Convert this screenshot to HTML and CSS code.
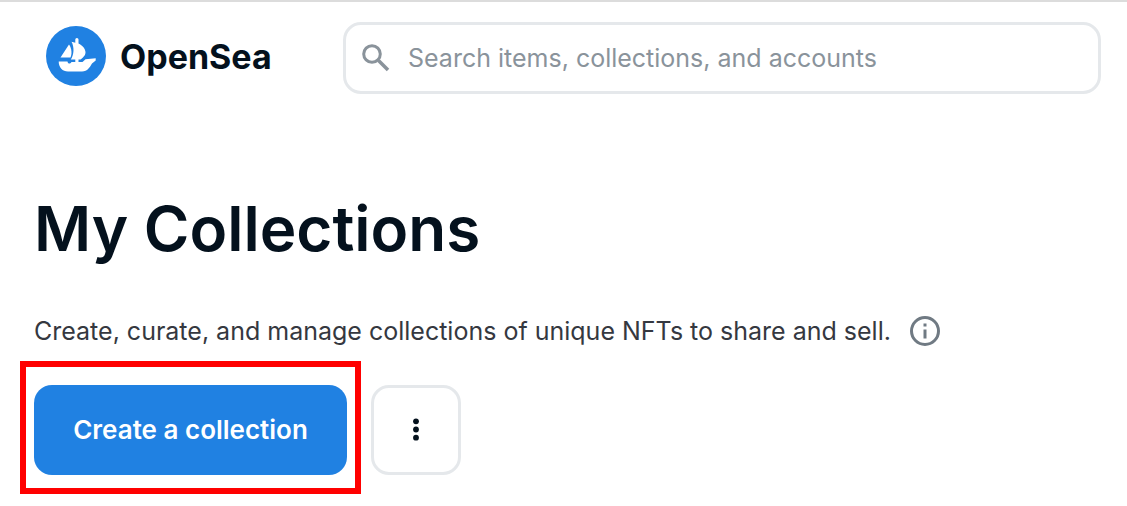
FILE: index.html
```html
<!DOCTYPE html>
<html lang="en">
<head>
  <meta charset="utf-8">
  <meta name="viewport" content="width=device-width, initial-scale=1">
  <title>My Collections</title>
  <link rel="stylesheet" href="styles.css">
</head>
<body>
  <header class="header">
    <a class="brand" href="#">
      <svg class="brand-mark" viewBox="0 0 60 60" aria-hidden="true">
        <circle cx="30" cy="30" r="30" fill="#2081e2"/>
        <path fill="#fff" d="M23 18.500C26 22.500 26 28 24.500 31.500H14.500Z"/>
        <path fill="#fff" d="M25.500 15.700L29.300 16.700V13.500Q29.300 12 30.900 12T32.500 13.500V17.600C36.500 19.500 39.500 23 39.500 26.500C39.500 29.500 36.500 32 34.500 33.500H32.500V36H36.500L39.500 33.300L49.700 32.300V34.500L46 37.500C44 41 41.500 45.500 36 45.500H22C16.500 45.500 12.700 41.500 12.700 35.500H21.500C22 38 24 38.200 25.500 36H29.300V33.500H24.800C28 29 28.500 21 25.500 15.700Z"/>
      </svg>
      <span class="brand-name">OpenSea</span>
    </a>
    <label class="search">
      <svg class="search-icon" viewBox="0 0 28 28" aria-hidden="true">
        <g fill="none" stroke="#8a939b" stroke-width="3">
          <circle cx="10" cy="10" r="8.300"/>
          <path d="M16.500 16.500L26 26" stroke-width="3.600"/>
        </g>
      </svg>
      <input class="search-input" type="search" placeholder="Search items, collections, and accounts" aria-label="Search">
    </label>
  </header>
  <main class="main">
    <h1 class="title">My Collections</h1>
    <p class="intro">
      <span>Create, curate, and manage collections of unique NFTs to share and sell.</span>
      <svg class="info-icon" viewBox="0 0 32 32" role="img" aria-label="Information">
        <circle cx="16" cy="16" r="13.500" fill="none" stroke="#707a83" stroke-width="3"/>
        <path fill="#707a83" d="M14.500 8.500h3v3h-3zM14.500 14.500h3v9h-3z"/>
      </svg>
    </p>
    <div class="actions">
      <div class="highlight">
        <button class="create" type="button">Create a collection</button>
      </div>
      <button class="more" type="button" aria-label="More options">
        <svg class="more-icon" viewBox="0 0 8 24" aria-hidden="true">
          <g fill="#04111d">
            <circle cx="4" cy="3.300" r="2.900"/>
            <circle cx="4" cy="11.500" r="2.900"/>
            <circle cx="4" cy="19.700" r="2.900"/>
          </g>
        </svg>
      </button>
    </div>
  </main>
</body>
</html>
```
FILE: styles.css
```css
* {
  box-sizing: border-box;
}

body {
  margin: 0;
  border-top: 2px solid #dcdcdc;
  background: #fff;
  color: #04111d;
  font-family: Inter, sans-serif;
}

.header {
  display: flex;
  align-items: flex-start;
  padding: 20px 26px 0 46px;
}

.brand {
  display: flex;
  flex: none;
  align-items: center;
  gap: 14px;
  width: 297px;
  height: 68px;
  color: inherit;
  text-decoration: none;
}

.brand-mark {
  width: 60px;
  height: 60px;
}

.brand-name {
  font-size: 34px;
  font-weight: 700;
}

.search {
  display: flex;
  flex: 1;
  align-items: center;
  gap: 18px;
  height: 72px;
  padding: 0 16px;
  border: 3px solid #e5e8eb;
  border-radius: 18px;
}

.search-icon {
  flex: none;
  width: 28px;
  height: 28px;
}

.search-input {
  flex: 1;
  min-width: 0;
  padding: 0;
  border: 0;
  outline: 0;
  background: none;
  color: #04111d;
  font: 400 25px/36px Inter, sans-serif;
}

.search-input::placeholder {
  color: #8a939b;
  opacity: 1;
}

.main {
  padding: 90px 20px 12px;
}

.title {
  margin: 0 14px;
  font-size: 62px;
  font-weight: 600;
  line-height: 90px;
}

.intro {
  display: flex;
  align-items: center;
  gap: 18px;
  margin: 39px 14px 12px;
  color: #353840;
  font-size: 25px;
  line-height: 36px;
}

.info-icon {
  flex: none;
  width: 32px;
  height: 32px;
}

.actions {
  display: flex;
  align-items: flex-start;
  gap: 10px;
}

.highlight {
  padding: 18px 8px 13px;
  border: 6px solid #f00;
}

.create,
.more {
  height: 90px;
  border-radius: 18px;
  cursor: pointer;
}

.create {
  width: 313px;
  padding: 0;
  border: 0;
  background: #2081e2;
  color: #fff;
  font: 600 26px/36px Inter, sans-serif;
}

.more {
  display: grid;
  place-items: center;
  width: 90px;
  margin-top: 24px;
  padding: 0;
  border: 3px solid #e5e8eb;
  background: #fff;
}

.more-icon {
  width: 8px;
  height: 24px;
}
```
